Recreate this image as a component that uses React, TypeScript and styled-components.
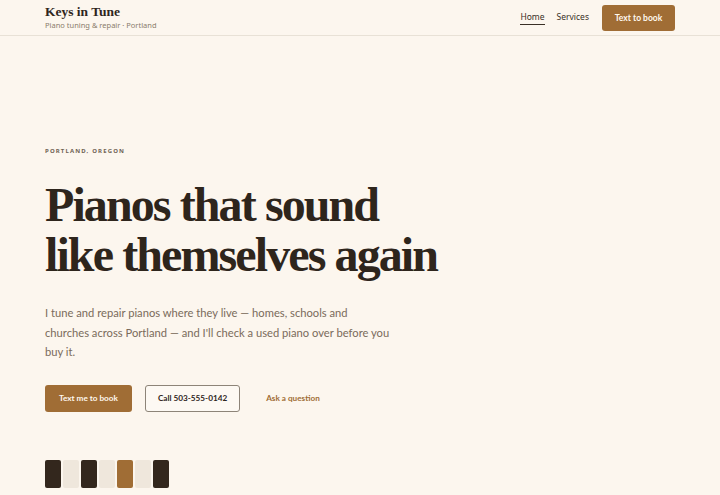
import React from "react";
import styled, { createGlobalStyle } from "styled-components";

const Global = createGlobalStyle`
  html, body { margin: 0; padding: 0; background: #fcf6ee; }
  body { font-family: "Noto Sans", sans-serif; color: #2e251c; }
`;

const Page = styled.div`
  min-height: 495px;
  background: #fcf6ee;
`;

const Header = styled.header`
  height: 36px;
  box-sizing: border-box;
  border-bottom: 1px solid #e8e1d6;
  display: flex;
  align-items: center;
  justify-content: space-between;
  padding: 0 45px;
`;

const Brand = styled.div`
  display: flex;
  flex-direction: column;
  gap: 1px;
  margin-top: -1px;
`;

const BrandName = styled.div`
  font-family: "Liberation Serif", serif;
  font-weight: 700;
  font-size: 13.5px;
  line-height: 15px;
  color: #2e251c;
`;

const BrandSub = styled.div`
  font-size: 7.5px;
  line-height: 10px;
  color: #8a7c6c;
`;

const Nav = styled.nav`
  display: flex;
  align-items: center;
  gap: 12px;
`;

const NavLink = styled.a<{ $active?: boolean }>`
  font-size: 8.5px;
  color: #3a3026;
  text-decoration: none;
  padding-bottom: 2px;
  border-bottom: 1px solid ${(p) => (p.$active ? "#3a3026" : "transparent")};
`;

const HeaderButton = styled.a`
  margin-left: 1px;
  background: #a06d35;
  color: #fff8ee;
  font-family: "Lato", sans-serif;
  font-size: 8.5px;
  font-weight: 700;
  white-space: nowrap;
  border-radius: 3px;
  height: 26px;
  width: 73px;
  box-sizing: border-box;
  display: flex;
  align-items: center;
  justify-content: center;
`;

const Hero = styled.section`
  padding: 111px 45px 0;
`;

const Eyebrow = styled.div`
  font-size: 6px;
  font-weight: 700;
  letter-spacing: 1.15px;
  text-transform: uppercase;
  color: #6f6254;
  line-height: 8px;
`;

const Title = styled.h1`
  margin: 25px 0 0;
  font-family: "Liberation Serif", serif;
  font-weight: 700;
  font-size: 48px;
  line-height: 50px;
  letter-spacing: -1.9px;
  color: #2e251c;
`;

const Lead = styled.p`
  margin: 23px 0 0;
  width: 347px;
  font-family: "Lato", sans-serif;
  font-size: 11.2px;
  line-height: 19.5px;
  color: #7a6b5b;
`;

const Actions = styled.div`
  display: flex;
  align-items: center;
  gap: 13px;
  margin-top: 23px;
`;

const Button = styled.a<{ $variant: "primary" | "outline" | "link" }>`
  height: 27px;
  box-sizing: border-box;
  display: flex;
  align-items: center;
  justify-content: center;
  font-family: "Lato", sans-serif;
  font-size: 8.2px;
  font-weight: 700;
  white-space: nowrap;
  border-radius: 3px;
  padding: 0 ${(p) => (p.$variant === "primary" ? "13px" : "12px")};
  background: ${(p) => (p.$variant === "primary" ? "#a06d35" : p.$variant === "outline" ? "#fdf9f3" : "transparent")};
  color: ${(p) => (p.$variant === "primary" ? "#fff8ee" : p.$variant === "outline" ? "#2e251c" : "#a06d35")};
  border: 1px solid ${(p) => (p.$variant === "outline" ? "#8d8478" : "transparent")};
`;

const Keys = styled.div`
  display: flex;
  gap: 2px;
  margin-top: 48px;
`;

const Key = styled.div<{ $tone: "dark" | "light" | "accent" }>`
  width: 16px;
  height: 28px;
  border-radius: 2px;
  background: ${(p) => (p.$tone === "dark" ? "#33271d" : p.$tone === "accent" ? "#a06d35" : "#efe7dc")};
`;

const tones: Array<"dark" | "light" | "accent"> = ["dark", "light", "dark", "light", "accent", "light", "dark"];

export default function App() {
  return (
    <Page>
      <Global />
      <Header>
        <Brand>
          <BrandName>Keys in Tune</BrandName>
          <BrandSub>Piano tuning &amp; repair · Portland</BrandSub>
        </Brand>
        <Nav>
          <NavLink $active>Home</NavLink>
          <NavLink>Services</NavLink>
          <HeaderButton>Text to book</HeaderButton>
        </Nav>
      </Header>
      <Hero>
        <Eyebrow>Portland, Oregon</Eyebrow>
        <Title>
          Pianos that sound
          <br />
          like themselves again
        </Title>
        <Lead>
          I tune and repair pianos where they live — homes, schools and churches across Portland — and I'll check a used piano over before you buy it.
        </Lead>
        <Actions>
          <Button $variant="primary">Text me to book</Button>
          <Button $variant="outline">Call 503-555-0142</Button>
          <Button $variant="link">Ask a question</Button>
        </Actions>
        <Keys>
          {tones.map((t, i) => (
            <Key key={i} $tone={t} />
          ))}
        </Keys>
      </Hero>
    </Page>
  );
}
